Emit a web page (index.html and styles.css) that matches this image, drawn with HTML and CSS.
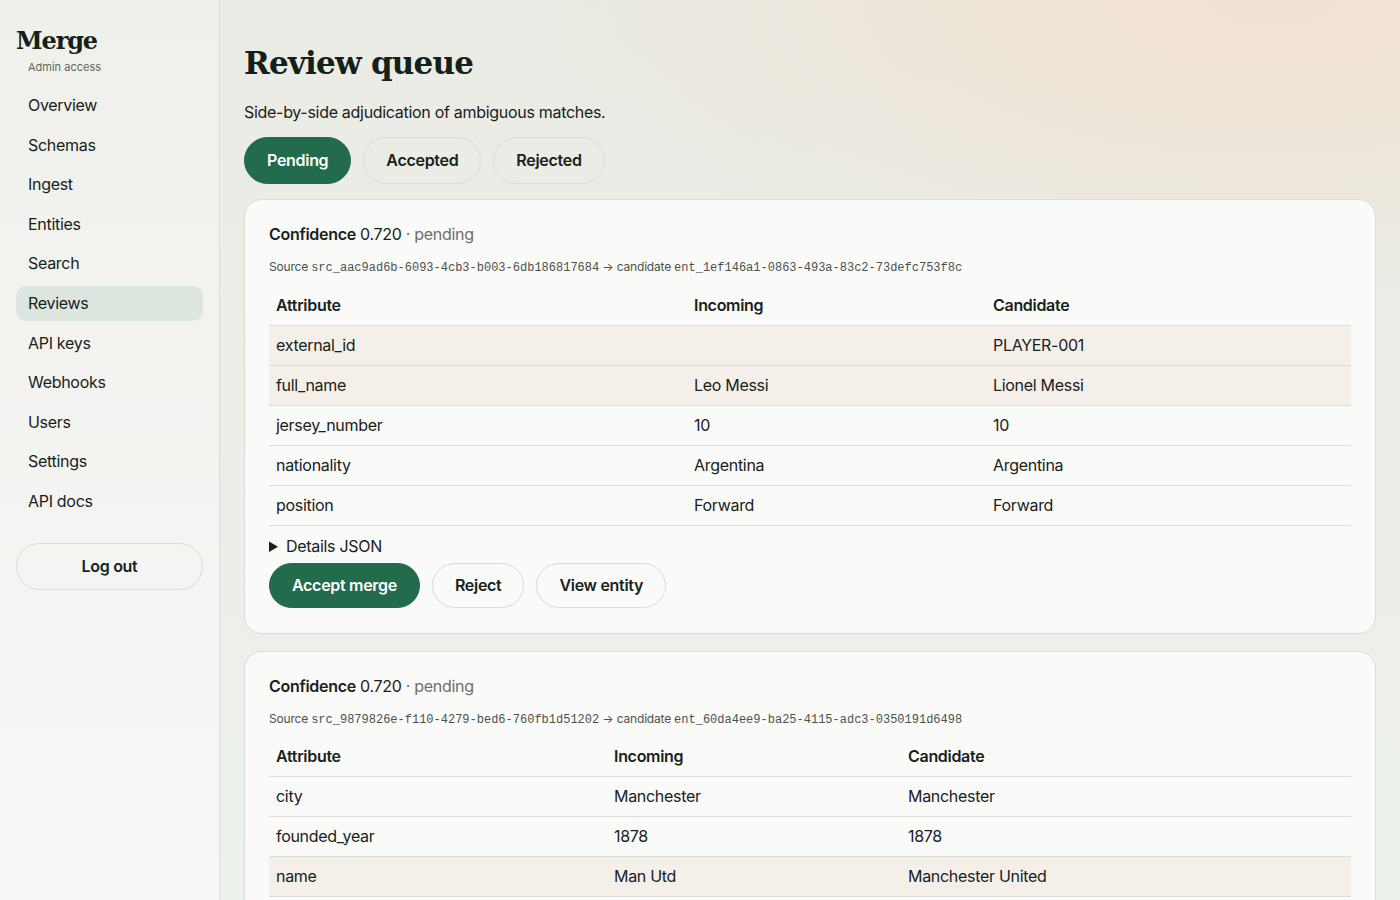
FILE: index.html
```html
<!DOCTYPE html>
<html lang="en">
<head>
    <meta charset="UTF-8">
    <meta name="viewport" content="width=device-width, initial-scale=1.0">
    <title>Review queue · Merge</title>
    <link rel="stylesheet" href="styles.css">
</head>
<body>
    <aside class="sidebar">
        <div class="brand">
            <div class="brand-name">Merge</div>
            <div class="brand-sub">Admin access</div>
        </div>
        <nav class="nav">
            <a class="nav-item" href="#">Overview</a>
            <a class="nav-item" href="#">Schemas</a>
            <a class="nav-item" href="#">Ingest</a>
            <a class="nav-item" href="#">Entities</a>
            <a class="nav-item" href="#">Search</a>
            <a class="nav-item active" href="#">Reviews</a>
            <a class="nav-item" href="#">API keys</a>
            <a class="nav-item" href="#">Webhooks</a>
            <a class="nav-item" href="#">Users</a>
            <a class="nav-item" href="#">Settings</a>
            <a class="nav-item" href="#">API docs</a>
        </nav>
        <button class="btn btn-block">Log out</button>
    </aside>

    <main class="main">
        <h1 class="page-title">Review queue</h1>
        <p class="page-sub">Side-by-side adjudication of ambiguous matches.</p>

        <div class="tabs">
            <button class="btn btn-primary">Pending</button>
            <button class="btn">Accepted</button>
            <button class="btn">Rejected</button>
        </div>

        <section class="card">
            <p class="card-head"><strong>Confidence</strong> 0.720 <span class="muted">· pending</span></p>
            <p class="card-ids">Source <code>src_aac9ad6b-6093-4cb3-b003-6db186817684</code> → candidate <code>ent_1ef146a1-0863-493a-83c2-73defc753f8c</code></p>
            <table class="diff diff-player">
                <colgroup>
                    <col class="c1"><col class="c2"><col class="c3">
                </colgroup>
                <thead>
                    <tr><th>Attribute</th><th>Incoming</th><th>Candidate</th></tr>
                </thead>
                <tbody>
                    <tr class="changed"><td>external_id</td><td></td><td>PLAYER-001</td></tr>
                    <tr class="changed"><td>full_name</td><td>Leo Messi</td><td>Lionel Messi</td></tr>
                    <tr><td>jersey_number</td><td>10</td><td>10</td></tr>
                    <tr><td>nationality</td><td>Argentina</td><td>Argentina</td></tr>
                    <tr><td>position</td><td>Forward</td><td>Forward</td></tr>
                </tbody>
            </table>
            <details class="json">
                <summary>Details JSON</summary>
            </details>
            <div class="actions">
                <button class="btn btn-primary">Accept merge</button>
                <button class="btn">Reject</button>
                <button class="btn">View entity</button>
            </div>
        </section>

        <section class="card">
            <p class="card-head"><strong>Confidence</strong> 0.720 <span class="muted">· pending</span></p>
            <p class="card-ids">Source <code>src_9879826e-f110-4279-bed6-760fb1d51202</code> → candidate <code>ent_60da4ee9-ba25-4115-adc3-0350191d6498</code></p>
            <table class="diff diff-club">
                <colgroup>
                    <col class="c1"><col class="c2"><col class="c3">
                </colgroup>
                <thead>
                    <tr><th>Attribute</th><th>Incoming</th><th>Candidate</th></tr>
                </thead>
                <tbody>
                    <tr><td>city</td><td>Manchester</td><td>Manchester</td></tr>
                    <tr><td>founded_year</td><td>1878</td><td>1878</td></tr>
                    <tr class="changed"><td>name</td><td>Man Utd</td><td>Manchester United</td></tr>
                </tbody>
            </table>
        </section>
    </main>
</body>
</html>
```

FILE: styles.css
```css
* {
    box-sizing: border-box;
}

html,
body {
    height: 100%;
}

body {
    margin: 0;
    display: flex;
    overflow: hidden;
    font-family: Inter, "Noto Sans", sans-serif;
    font-size: 16px;
    letter-spacing: -0.3px;
    color: #17221c;
    background-color: #edf1ec;
    background-image:
        radial-gradient(ellipse 720px 300px at 1270px 0, rgba(242, 224, 208, 0.95), rgba(242, 224, 208, 0) 100%),
        linear-gradient(180deg, #eaebe4 0%, #edf1ec 100%);
}

/* sidebar */

.sidebar {
    width: 220px;
    flex-shrink: 0;
    padding: 25px 16px;
    border-right: 1px solid #dcdfd9;
    background: linear-gradient(180deg, #f0f0eb 0%, #f6f8f6 100%);
}

.brand {
    margin-bottom: 14px;
}

.brand-name {
    font-family: "DejaVu Serif", "Liberation Serif", serif;
    font-weight: bold;
    font-size: 24px;
    line-height: 32px;
    letter-spacing: -1.1px;
    color: #13211a;
}

.brand-sub {
    margin-top: 3px;
    padding-left: 12px;
    font-size: 11px;
    line-height: 14px;
    letter-spacing: 0;
    color: #5f6761;
}

.nav {
    display: flex;
    flex-direction: column;
    gap: 4.6px;
    margin-bottom: 24px;
}

.nav-item {
    display: block;
    padding: 8px 12px;
    line-height: 19px;
    border-radius: 10px;
    color: #17221c;
    text-decoration: none;
}

.nav-item.active {
    background-color: #dde5df;
}

/* buttons */

.btn {
    font-family: inherit;
    font-size: 16px;
    font-weight: 600;
    line-height: 19px;
    letter-spacing: -0.3px;
    padding: 12px 22px;
    color: #17221c;
    background-color: transparent;
    border: 1px solid #d9dbd5;
    border-radius: 999px;
    cursor: pointer;
}

.btn-primary {
    color: #fff;
    background-color: #226b4c;
    border-color: #226b4c;
}

.btn-block {
    width: 100%;
    padding: 13px 22px;
}

/* main */

.main {
    flex: 1;
    padding: 0 24px;
    overflow: hidden;
}

.page-title {
    margin: 43px 0 0;
    font-family: "DejaVu Serif", "Liberation Serif", serif;
    font-weight: bold;
    font-size: 31px;
    line-height: 40px;
    letter-spacing: -0.8px;
    color: #13211a;
}

.page-sub {
    margin: 19px 0 15px;
    line-height: 20px;
}

.tabs {
    display: flex;
    gap: 12px;
    margin-bottom: 15px;
}

.tabs .btn {
    padding: 13px 22px;
}

.card {
    padding: 25px 24px 25px;
    margin-bottom: 17px;
    background-color: #fafaf8;
    border: 1px solid #dcddd8;
    border-radius: 18px;
}

.card-head {
    margin: 0;
    line-height: 19px;
}

.card-head strong {
    font-weight: 600;
}

.muted {
    color: #6b706c;
}

.card-ids {
    margin: 15px 0 10px;
    font-size: 12px;
    line-height: 16px;
    letter-spacing: -0.2px;
    color: #4b524d;
}

.card-ids code {
    font-family: "Liberation Mono", "DejaVu Sans Mono", monospace;
    font-size: 12px;
    letter-spacing: 0;
}

/* diff table */

.diff {
    width: 100%;
    border-collapse: collapse;
    table-layout: fixed;
}

.diff th,
.diff td {
    padding: 0 7px;
    height: 40px;
    text-align: left;
    line-height: 19px;
    border-bottom: 1px solid #dedbd5;
}

.diff th {
    height: 39px;
    font-weight: 600;
}

.diff tr.changed td {
    background-color: #f5efe9;
}

.diff-player .c1 { width: 418px; }
.diff-player .c2 { width: 299px; }

.diff-club .c1 { width: 338px; }
.diff-club .c2 { width: 294px; }

.json {
    margin: 10px 0 7px;
}

.json summary {
    line-height: 20px;
    cursor: pointer;
}

.actions {
    display: flex;
    gap: 12px;
}
```
